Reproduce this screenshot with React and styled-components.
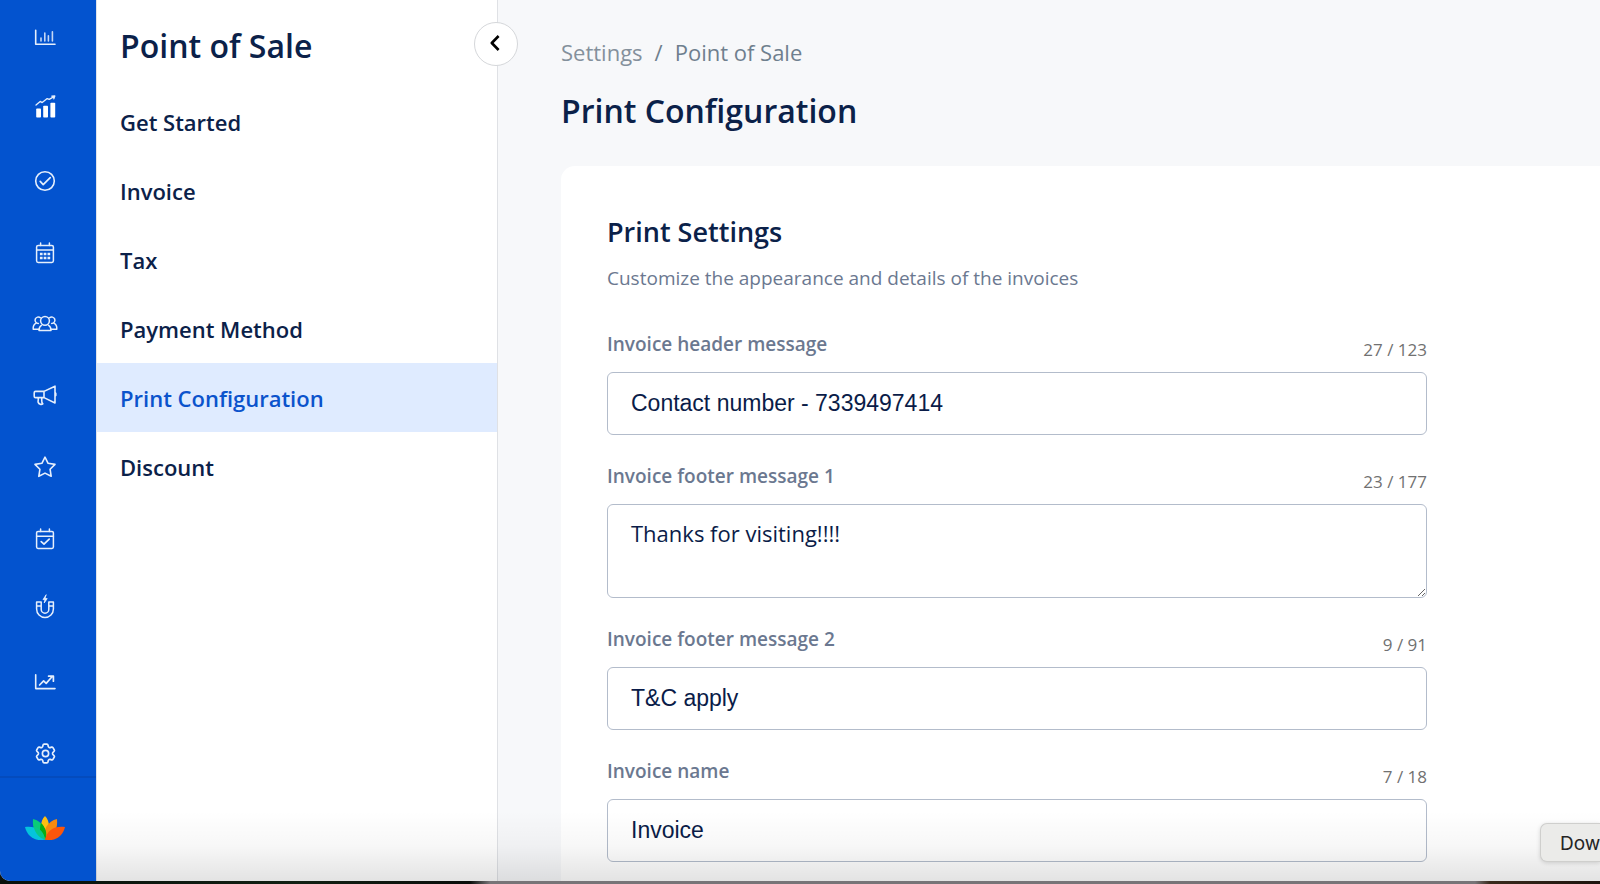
import React from "react";
import styled, { createGlobalStyle } from "styled-components";
import { HiOutlineCog6Tooth } from "react-icons/hi2";

const GlobalStyle = createGlobalStyle`
  *, *::before, *::after { box-sizing: border-box; }
  body {
    margin: 0;
    overflow: hidden;
    background: #0b120e;
    color: #0b2149;
    font-family: "Open Sans", "Noto Sans", sans-serif;
  }
  h1, h2, p, ul { margin: 0; padding: 0; }
`;

const Screen = styled.div`
  display: flex;
  flex-direction: column;
  height: 100vh;
`;

const Shell = styled.div`
  position: relative;
  flex: 1;
  min-height: 0;
  display: flex;
  overflow: hidden;
  border-bottom-left-radius: 10px;
  background: #f7f8fa;
`;

const Desktop = styled.div`
  height: 3px;
  background: linear-gradient(90deg, #08100b 0, #122013 300px, #0a0d0a 470px, #777477 490px, #777477 1475px, #3a2a1c 1490px, #1c120c 100%);
`;

const BottomShade = styled.div`
  position: absolute;
  left: 96px;
  right: 0;
  bottom: 0;
  height: 70px;
  pointer-events: none;
  background: linear-gradient(180deg, rgba(0, 0, 0, 0), rgba(0, 0, 0, 0.03) 50%, rgba(0, 0, 0, 0.11));
`;

const Rail = styled.aside`
  flex: none;
  width: 96px;
  display: flex;
  flex-direction: column;
  background: #0353cf;
`;

const RailNav = styled.nav`
  flex: 1;
  display: flex;
  flex-direction: column;
  justify-content: space-between;
  align-items: center;
  padding: 16px 6px 1px 0;
`;

const RailButton = styled.button`
  display: grid;
  place-items: center;
  width: 44px;
  height: 44px;
  padding: 0;
  border: 0;
  background: none;
  color: #e6effc;
  svg { overflow: visible; }
`;

const RailBrand = styled.div`
  height: 105px;
  display: grid;
  place-items: center;
  padding: 0 6px 3px 0;
  border-top: 2px solid #044bbd;
`;

const Sidebar = styled.aside`
  position: relative;
  flex: none;
  width: 402px;
  padding-top: 20px;
  border-left: 1px solid #dfe3ea;
  border-right: 1px solid #dfe1e5;
  background: #fff;
`;

const SidebarTitle = styled.h2`
  padding-left: 23px;
  font-size: 32px;
  line-height: 52px;
  font-weight: 600;
`;

const Menu = styled.ul`
  margin-top: 15px;
  list-style: none;
`;

const MenuLink = styled.a`
  display: flex;
  align-items: center;
  height: 69px;
  padding-left: 23px;
  font-size: 22px;
  font-weight: 600;
  text-decoration: none;
  color: ${(p) => (p.$active ? "#0b53cc" : "#0b2149")};
  background: ${(p) => (p.$active ? "#dfebff" : "transparent")};
`;

const CollapseButton = styled.button`
  position: absolute;
  top: 22px;
  right: -21px;
  z-index: 1;
  display: grid;
  place-items: center;
  width: 44px;
  height: 44px;
  padding: 0 2px 2px 0;
  border: 1px solid #d5d7da;
  border-radius: 50%;
  background: #fff;
  color: #000;
`;

const Main = styled.main`
  flex: 1;
  min-width: 0;
  padding: 35px 0 0 63px;
`;

const Breadcrumb = styled.nav`
  display: flex;
  gap: 12px;
  font-size: 22px;
  line-height: 34px;
  color: #6f7f8e;
  a { color: #84909c; text-decoration: none; }
`;

const PageTitle = styled.h1`
  margin-top: 16px;
  font-size: 32px;
  line-height: 52px;
  font-weight: 600;
`;

const Card = styled.section`
  margin-top: 29px;
  padding: 44px 46px 80px;
  border-top-left-radius: 14px;
  background: #fff;
`;

const CardTitle = styled.h2`
  font-size: 27px;
  line-height: 44px;
  font-weight: 600;
`;

const CardText = styled.p`
  margin-top: 10px;
  font-size: 19px;
  line-height: 28px;
  color: #6b7890;
`;

const Form = styled.form`
  max-width: 820px;
  margin-top: 11px;
`;

const FieldHead = styled.div`
  display: flex;
  justify-content: space-between;
  align-items: flex-end;
  height: 69px;
  padding-bottom: 8px;
`;

const Label = styled.label`
  padding-bottom: 6px;
  font-size: 19px;
  line-height: 28px;
  font-weight: 600;
  color: #6b7890;
`;

const Counter = styled.span`
  font-size: 17px;
  line-height: 28px;
  color: #717171;
`;

const TextInput = styled.input`
  display: block;
  width: 100%;
  height: 63px;
  padding: 0 23px;
  border: 1px solid #b3bccb;
  border-radius: 6px;
  background: #fff;
  color: #0a1c48;
  font-family: "Liberation Sans", Arial, sans-serif;
  font-size: 23px;
`;

const TextArea = styled.textarea`
  display: block;
  width: 100%;
  height: 94px;
  padding: 11px 23px;
  border: 1px solid #b3bccb;
  border-radius: 6px;
  resize: vertical;
  background: #fff;
  color: #0a1c48;
  font-family: "Open Sans", "Noto Sans", sans-serif;
  font-size: 22px;
  line-height: 34px;
`;

const Tooltip = styled.div`
  position: absolute;
  right: 0;
  bottom: 19px;
  width: 60px;
  height: 39px;
  padding-left: 19px;
  overflow: hidden;
  border: 1px solid #cfcfcd;
  border-right: 0;
  border-radius: 7px 0 0 7px;
  background: #ebebe9;
  box-shadow: 0 1px 4px rgba(0, 0, 0, 0.15);
  color: #242424;
  font-family: Inter, sans-serif;
  font-size: 19px;
  line-height: 39px;
`;

const Glyph = ({ children, w = 1.6 }) => (
  <svg width="28" height="28" viewBox="0 0 28 28" fill="none" stroke="currentColor" strokeWidth={w} strokeLinecap="round" strokeLinejoin="round" aria-hidden="true">
    {children}
  </svg>
);

const railItems = [
  ["Dashboard", <Glyph><path d="M4.7 6.2V20.3H24" /><path d="M10 14v3M13.8 9v8M17.4 11.8V17M21.4 7.8V17" strokeOpacity=".85" /></Glyph>],
  ["Sales", <Glyph><g fill="#fff" stroke="none"><rect x="5.2" y="12.4" width="4.8" height="9.2" rx=".8" /><rect x="12.2" y="9.8" width="4.8" height="11.8" rx=".8" /><rect x="19.4" y="6.8" width="4.8" height="14.8" rx=".8" /></g><path d="M5 9 9.2 5.4l2 1.2 5-4 2 .8L23 .6M20.8.2l3-.2-1 2.8" strokeWidth="1.3" /></Glyph>],
  ["Tasks", <Glyph><circle cx="14" cy="14" r="9.3" /><path d="m9.2 14.4 3 3.2 7-7" strokeWidth="1.7" /></Glyph>],
  ["Calendar", <Glyph w={1.5}><rect x="5.6" y="6.4" width="16.8" height="17" rx="1.6" /><path d="M5.6 10.9h16.8M9.6 4v2.4M18.4 4v2.4" /><path d="M10.2 15h.1M14 15h.1M17.8 15h.1M10.2 19h.1M14 19h.1M17.8 19h.1" strokeWidth="2.6" strokeLinecap="square" /></Glyph>],
  ["Clients", <Glyph w={1.5}><circle cx="14" cy="10.8" r="4.4" /><path d="M10.4 15.4c-1.6 1-2.4 2.800-2.400 5h12c0-2.200-.8-4-2.400-5" /><path d="M9.400 7.800A3.200 3.200 0 1 0 7.400 13.400M18.600 7.800a3.200 3.200 0 1 1 2 5.600M4.800 13.400c-2 1-2.800 3-2.600 5.800H7.800M23.200 13.400c2 1 2.800 3 2.600 5.800h-5.600" /></Glyph>],
  ["Marketing", <Glyph><path d="M4.600 9.400H13V15.600H4.600a1.400 1.400 0 0 1-1.400-1.400v-3.400a1.400 1.400 0 0 1 1.400-1.400ZM13 9.400 24 4.200V21L13 15.600M24.800 11.400v2.200" /><path d="M7 15.800c1 1.200-.4 3 .2 4.600.7 1.800 3.200 2.600 4.600 1.400-1.600-1-1-2.600-1-6" /></Glyph>],
  ["Reviews", <Glyph><path d="m14 4.200 3.100 6.100 6.900 1.100-4.900 4.900 1.100 7-6.200-3.200-6.200 3.200 1.100-7L4 11.400l6.900-1.100Z" /></Glyph>],
  ["Bookings", <Glyph w={1.5}><rect x="5.600" y="6.400" width="16.800" height="17" rx="1.400" /><path d="M5.600 11.200h16.800M9.600 4v2.400M18.400 4v2.400" /><path d="m10.200 16.600 2.800 2.600 5.200-5" strokeWidth="1.700" /></Glyph>],
  ["Leads", <Glyph w={1.5}><path d="M5.600 6h4.600v7.400a3.800 3.800 0 0 0 7.600 0V6h4.600v7a8.400 8.400 0 0 1-16.800 0ZM5.600 10h4.600M17.800 10h4.600" /><path d="m15-1-3 4.600h2L13.200 7l3-4.400h-2Z" fill="currentColor" strokeWidth=".8" /></Glyph>],
  ["Reports", <Glyph><path d="M4.700 6.800V20.600H24" /><path d="m8.600 17 4-4.200 2.600 2.600 5.800-6.600M17.600 8.200h4.800v5" strokeWidth="1.700" /></Glyph>],
  ["Settings", <HiOutlineCog6Tooth size={25} strokeWidth={1.6} aria-hidden="true" />],
];

const Lotus = () => (
  <svg width="40" height="24" viewBox="0 0 40 24" role="img" aria-label="Brand">
    <path d="M20 0C25 5 26 15 20 24 14 15 15 5 20 0Z" fill="#ffbf12" />
    <path d="M32 3C33 13 29 21 20 24 17 14 23 5 32 3Z" fill="#f78a0e" />
    <path d="M8 3C7 13 11 21 20 24 23 14 17 5 8 3Z" fill="#0acb78" />
    <path d="M16 7C20.500 11 22.500 17.500 20.500 24 15 20 14 13 16 7Z" fill="#0bad12" />
    <path d="M40 11C38 20 30 26 20 23.600 22 14 30 9.500 40 11Z" fill="#fb560c" />
    <path d="M0 11C2 20 10 26 20 23.600 18 14 10 9.500 0 11Z" fill="#05c4dc" />
    <path d="M8.600 10.800C15 12 19 16.600 20 23.600 14.600 22 10.400 18 8.600 10.800Z" fill="#08c888" />
  </svg>
);

const menu = ["Get Started", "Invoice", "Tax", "Payment Method", "Print Configuration", "Discount"];

const fields = [
  { id: "header", label: "Invoice header message", count: "27 / 123", value: "Contact number - 7339497414" },
  { id: "footer1", label: "Invoice footer message 1", count: "23 / 177", value: "Thanks for visiting!!!!", multiline: true },
  { id: "footer2", label: "Invoice footer message 2", count: "9 / 91", value: "T&C apply" },
  { id: "name", label: "Invoice name", count: "7 / 18", value: "Invoice" },
];

export default function App() {
  return (
    <Screen>
      <GlobalStyle />
      <Shell>
        <Rail>
          <RailNav aria-label="Main">
            {railItems.map(([name, icon]) => (
              <RailButton key={name} type="button" aria-label={name}>{icon}</RailButton>
            ))}
          </RailNav>
          <RailBrand><Lotus /></RailBrand>
        </Rail>
        <Sidebar>
          <SidebarTitle>Point of Sale</SidebarTitle>
          <Menu>
            {menu.map((item) => (
              <li key={item}>
                <MenuLink href="#" $active={item === "Print Configuration"}>{item}</MenuLink>
              </li>
            ))}
          </Menu>
          <CollapseButton type="button" aria-label="Collapse menu">
            <svg width="10" height="16" viewBox="0 0 10 16" fill="none" stroke="currentColor" strokeWidth="2.6" aria-hidden="true">
              <path d="M8.600 1 1.800 8l6.800 7" strokeLinejoin="round" />
            </svg>
          </CollapseButton>
        </Sidebar>
        <Main>
          <Breadcrumb aria-label="Breadcrumb">
            <a href="#">Settings</a>
            <span>/</span>
            <span>Point of Sale</span>
          </Breadcrumb>
          <PageTitle>Print Configuration</PageTitle>
          <Card>
            <CardTitle>Print Settings</CardTitle>
            <CardText>Customize the appearance and details of the invoices</CardText>
            <Form>
              {fields.map((f) => (
                <div key={f.id}>
                  <FieldHead>
                    <Label htmlFor={f.id}>{f.label}</Label>
                    <Counter>{f.count}</Counter>
                  </FieldHead>
                  {f.multiline ? (
                    <TextArea id={f.id} defaultValue={f.value} />
                  ) : (
                    <TextInput id={f.id} type="text" defaultValue={f.value} />
                  )}
                </div>
              ))}
            </Form>
          </Card>
        </Main>
        <BottomShade />
        <Tooltip role="tooltip">Dow</Tooltip>
      </Shell>
      <Desktop />
    </Screen>
  );
}
